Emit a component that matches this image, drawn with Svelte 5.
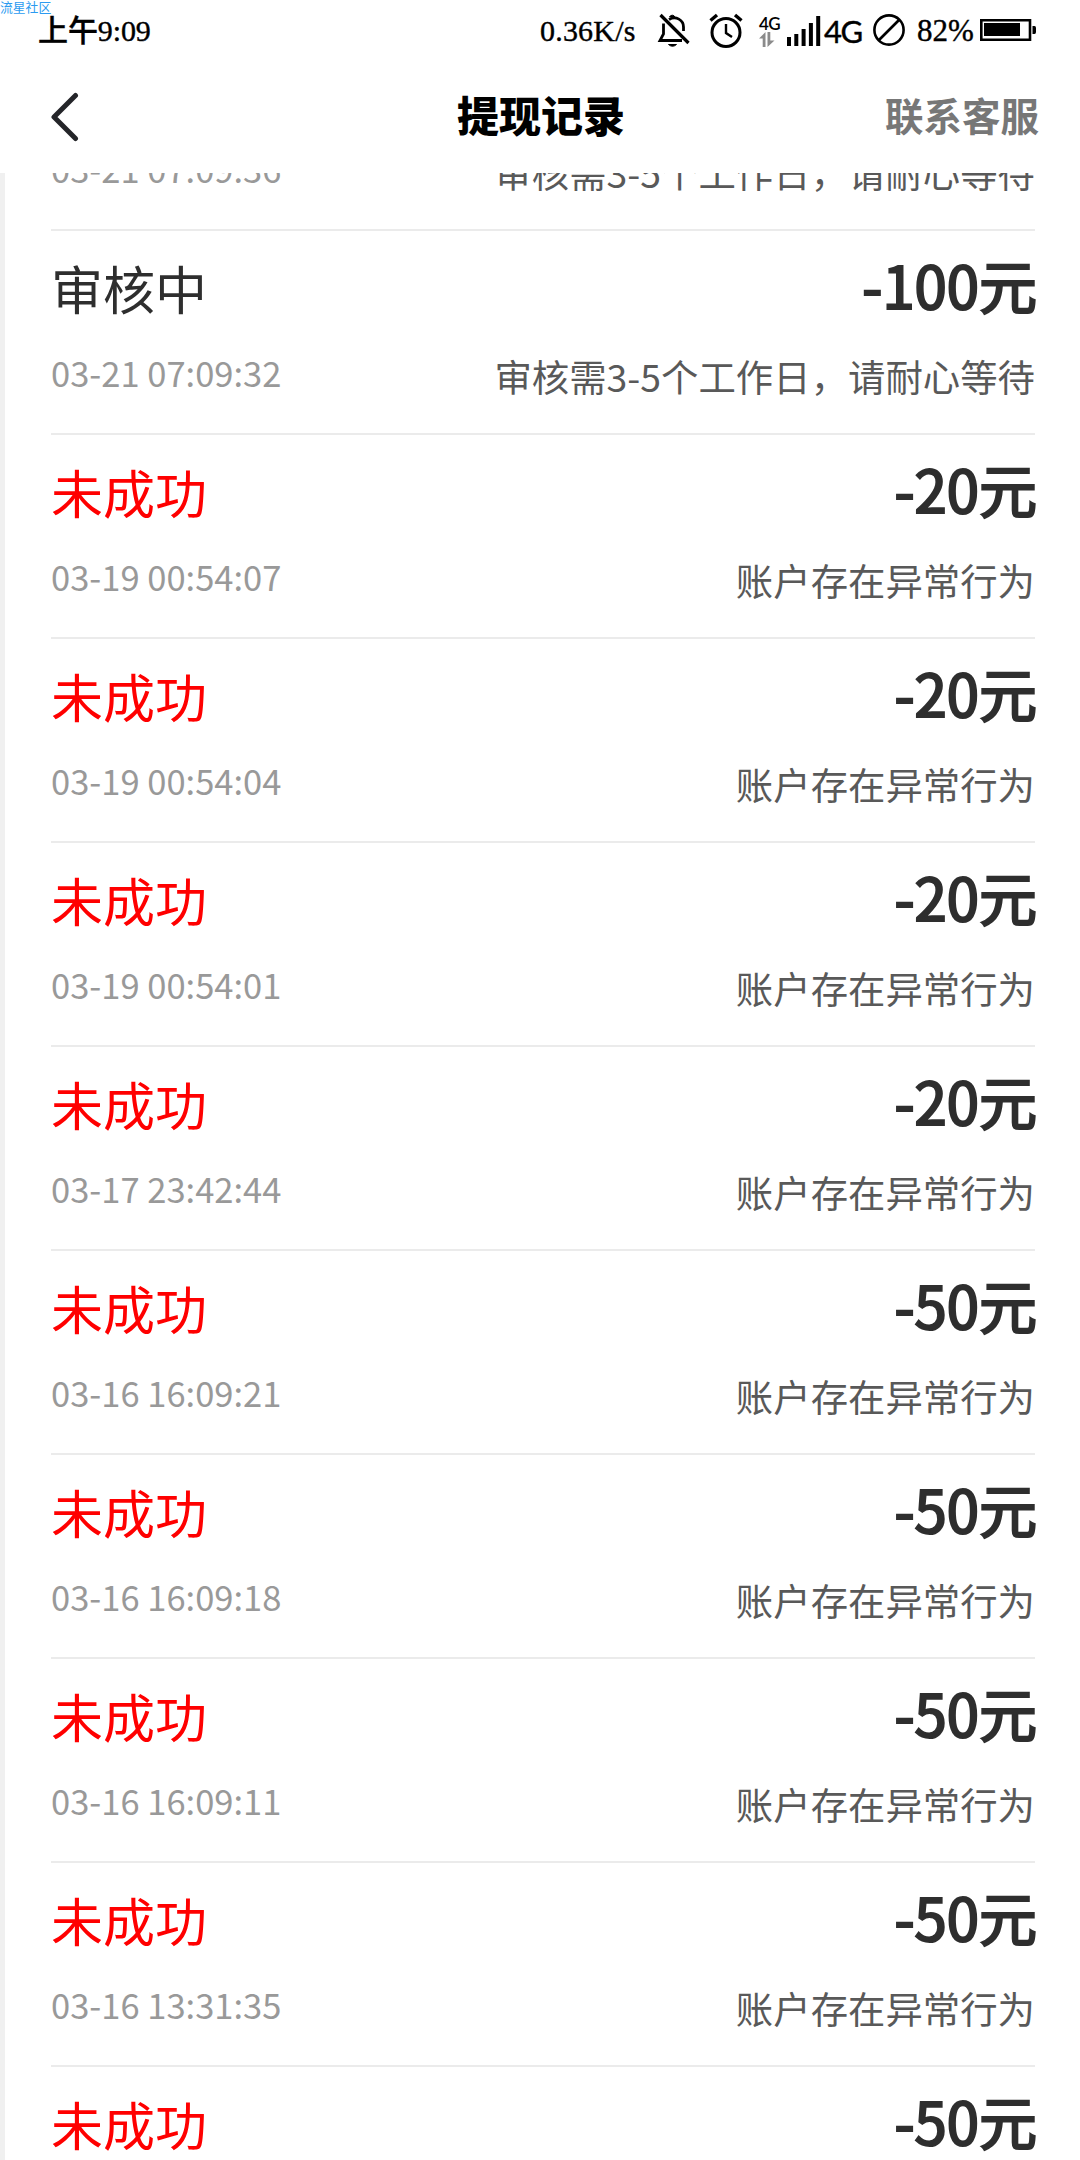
<script lang="ts">
  interface WithdrawRecord {
    status: string;
    failed: boolean;
    amount: number;
    time: string;
    note: string;
  }

  const reviewing = (amount: number, time: string): WithdrawRecord => ({
    status: '审核中',
    failed: false,
    amount,
    time,
    note: '审核需3-5个工作日，请耐心等待'
  });

  const rejected = (amount: number, time: string): WithdrawRecord => ({
    status: '未成功',
    failed: true,
    amount,
    time,
    note: '账户存在异常行为'
  });

  const records: WithdrawRecord[] = [
    reviewing(100, '03-21 07:09:36'),
    reviewing(100, '03-21 07:09:32'),
    rejected(20, '03-19 00:54:07'),
    rejected(20, '03-19 00:54:04'),
    rejected(20, '03-19 00:54:01'),
    rejected(20, '03-17 23:42:44'),
    rejected(50, '03-16 16:09:21'),
    rejected(50, '03-16 16:09:18'),
    rejected(50, '03-16 16:09:11'),
    rejected(50, '03-16 13:31:35'),
    rejected(50, '03-16 13:31:31')
  ];

  // the list is scrolled down: only the detail line of this record is left
  const firstVisible = 0;
</script>

<div class="screen">
  <span class="watermark">流星社区</span>

  <div class="status-bar">
    <span class="clock"><b>上午</b>9:09</span>
    <span class="speed">0.36K/s</span>
    <svg class="bell" width="34" height="36" viewBox="0 0 34 36" fill="none" stroke="#000" stroke-width="2.8">
      <path d="M6.5 10.5V21L3 27.5H25" />
      <path d="M12 6.5C19 2.500 26.500 7 26.500 14V18" />
      <path d="M3.500 2L31.500 30" stroke-width="3.200" />
      <path d="M12.500 4A3 3 0 0 1 18 4ZM11.500 31.500H19.500Q15.500 35 11.500 31.500Z" fill="#000" stroke-width="1" />
    </svg>
    <svg class="alarm" width="34" height="36" viewBox="0 0 34 36" fill="none" stroke="#000" stroke-width="3">
      <circle cx="17" cy="19.500" r="14" />
      <path d="M17 11V20L23 24" stroke-width="2.400" />
      <path d="M1.500 7.500L8 2M26 2L32.500 7.500" stroke-width="3.400" />
    </svg>
    <div class="data">
      <span>4G</span>
      <svg width="16" height="15" viewBox="0 0 16 15" fill="#8b8b8b">
        <path d="M0 6.500L6.500 0V15H3.700V6.500ZM8.500 0H11.300V8.500H15.500L8.500 15Z" />
      </svg>
    </div>
    <svg class="signal" width="34" height="31" viewBox="0 0 34 31">
      <path d="M0 22H4V31H0ZM7.300 19H11.300V31H7.300ZM14.600 14H18.600V31H14.600ZM21.900 8H25.900V31H21.900ZM29.200 1H33.200V31H29.200Z" />
    </svg>
    <span class="network">4G</span>
    <svg class="blocked" width="34" height="34" viewBox="0 0 34 34" fill="none" stroke="#000" stroke-width="2.600">
      <circle cx="17" cy="17" r="14.600" />
      <path d="M7 27L27 7" />
    </svg>
    <span class="percent">82%</span>
    <svg class="battery" width="57" height="24" viewBox="0 0 57 24">
      <path d="M1.300 2.300H50V21.700H1.300Z" fill="none" stroke="#000" stroke-width="2.600" />
      <path d="M4 5H40V18H4ZM52.500 8H54.500Q56 8 56 10V14Q56 16 54.500 16H52.500Z" />
    </svg>
  </div>

  <header class="nav-bar">
    <svg class="back" width="30" height="50" viewBox="0 0 30 50" fill="none" stroke="#242529" stroke-width="5" stroke-linecap="round" stroke-linejoin="round">
      <path d="M26.500 3.500L5 25L26.500 46.500" />
    </svg>
    <h1>提现记录</h1>
    <span class="service">联系客服</span>
  </header>

  <main class="list-view">
    <ul class="records">
      {#each records as record, i}
        <li class="record" class:partial={i === firstVisible}>
          {#if i !== firstVisible}
            <div class="line headline">
              <span class="status" class:failed={record.failed}>{record.status}</span>
              <span class="amount">-{record.amount}元</span>
            </div>
          {/if}
          {#if i < records.length - 1}
            <div class="line detail">
              <span class="time">{record.time}</span>
              <span class="note">{record.note}</span>
            </div>
          {/if}
        </li>
      {/each}
    </ul>
  </main>
</div>

<style>
  :global(body) {
    margin: 0;
    background: #fff;
  }

  .screen {
    position: relative;
    display: flex;
    flex-direction: column;
    width: 1080px;
    height: 2160px;
    overflow: hidden;
    background: #fff;
    font-family: 'Noto Sans CJK SC', sans-serif;
  }

  .watermark {
    position: absolute;
    top: 0;
    left: 0;
    font-size: 12.8px;
    line-height: 13px;
    color: #2b9bf0;
  }

  .status-bar {
    display: flex;
    align-items: center;
    flex: none;
    height: 62px;
    padding: 0 43px 0 38px;
    box-sizing: border-box;
    font-family: 'Liberation Serif', 'Noto Sans CJK SC', serif;
    font-size: 30px;
    line-height: 62px;
    color: #000;
    white-space: nowrap;
    -webkit-text-stroke: 0.4px #000;
  }

  .status-bar svg {
    flex: none;
  }

  .clock b {
    font-size: 30px;
    font-weight: 500;
  }

  .clock {
    letter-spacing: -0.1px;
  }

  .speed {
    width: 96px;
    margin-left: auto;
    letter-spacing: 0.2px;
  }

  .bell {
    margin-left: 21px;
  }

  .alarm {
    margin-left: 18px;
  }

  .data {
    display: flex;
    flex-direction: column;
    width: 21px;
    margin-left: 16px;
    -webkit-text-stroke: 0;
  }

  .data span {
    font-family: Lato, sans-serif;
    font-size: 17px;
    font-weight: 600;
    line-height: 17px;
    letter-spacing: -0.5px;
  }

  .signal {
    margin: 0 0 1px 7px;
  }

  .network {
    width: 37px;
    margin: 0 0 1px 3px;
    font-family: Lato, sans-serif;
    font-size: 31px;
    letter-spacing: -1.5px;
  }

  .blocked {
    margin: 0 0 2px 11px;
  }

  .percent {
    width: 57px;
    margin-left: 11px;
    font-size: 31px;
  }

  .battery {
    margin: 0 0 2px 6px;
  }

  .nav-bar {
    display: grid;
    grid-template-columns: 1fr auto 1fr;
    align-items: center;
    flex: none;
    height: 111px;
    padding: 0 41px 0 49px;
    box-sizing: border-box;
  }

  .back {
    margin-bottom: 1px;
  }

  h1 {
    margin: 0 6px 8px 0;
    font-size: 42px;
    font-weight: 900;
    line-height: 60px;
    color: #000;
  }

  .service {
    justify-self: end;
    margin-bottom: 8px;
    font-size: 38.5px;
    font-weight: 700;
    color: #777;
  }

  .list-view {
    flex: 1;
    min-height: 0;
    overflow: hidden;
    border-left: 5px solid #f0f0f0;
  }

  .records {
    list-style: none;
    margin: -46px 0 0;
    padding: 0 45px 0 46px;
  }

  .record {
    height: 204px;
    box-sizing: border-box;
    padding-top: 20px;
    border-bottom: 2px solid #ebebeb;
  }

  .record.partial {
    height: 104px;
    padding-top: 0;
  }

  .line {
    display: flex;
    justify-content: space-between;
    align-items: center;
    white-space: nowrap;
  }

  .headline {
    height: 80px;
  }

  .detail {
    height: 84px;
  }

  .status {
    margin-bottom: 7px;
    font-size: 52px;
    color: #2e2e2e;
  }

  .status.failed {
    color: #f00;
  }

  .amount {
    margin: 0 -2px 13px 0;
    font-size: 58px;
    line-height: 67px;
    color: #2e2e2e;
    -webkit-text-stroke: 2.2px #2e2e2e;
  }

  .time {
    margin-bottom: 3px;
    font-size: 34.5px;
    color: #999;
  }

  .note {
    margin-top: 5px;
    font-size: 37.4px;
    color: #595959;
  }
</style>
